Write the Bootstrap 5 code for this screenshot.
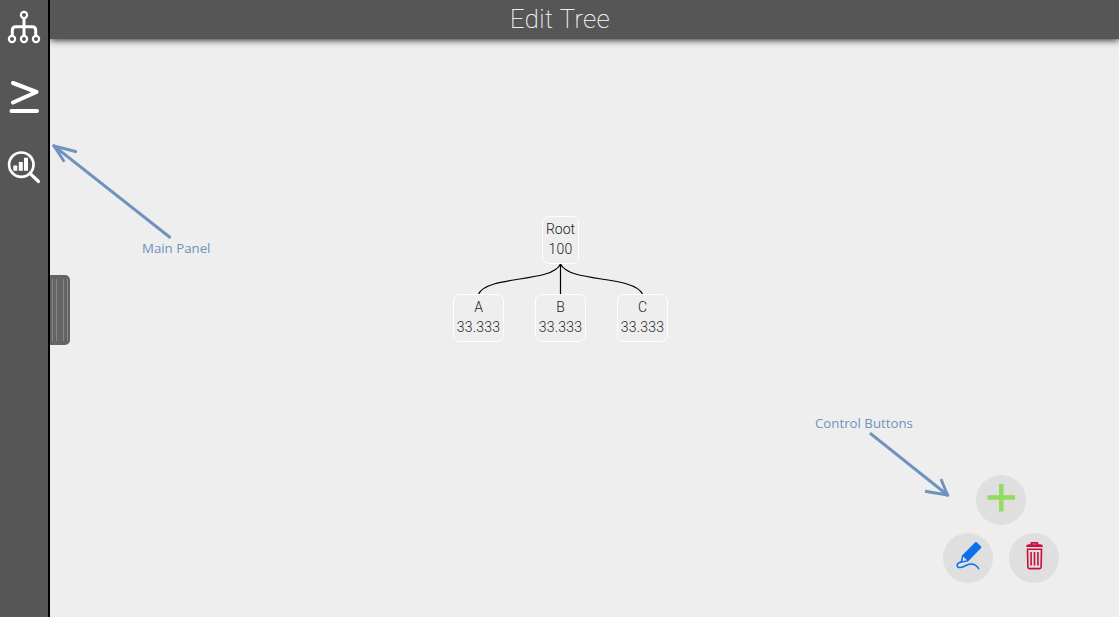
<!DOCTYPE html>
<html lang="en">
<head>
<meta charset="utf-8">
<meta name="viewport" content="width=device-width, initial-scale=1">
<title>Edit Tree</title>
<link href="https://cdn.jsdelivr.net/npm/bootstrap@5.3.0/dist/css/bootstrap.min.css" rel="stylesheet">
<style>
body{background:#eee;font-family:Roboto,"Liberation Sans",sans-serif}
.side{width:50px;background:#565656;border-right:2px solid #000;z-index:3}
.side .tool{width:48px;height:70px;padding:0;border:0;line-height:0}
.side .tool:first-child{height:62px;padding-bottom:6px}
.handle{left:50px;top:275px;width:20px;height:70px;background:#646464;border-radius:0 5px 5px 0;padding:0 2px}
.handle i{width:1px;height:62px;background:#858585}
.topbar{height:39px;background:#565656;box-shadow:0 1px 7px rgba(0,0,0,.85);padding-right:49px}
.topbar h1{font-size:25.5px;font-weight:100;color:#fff;line-height:38px;letter-spacing:.5px;-webkit-text-stroke:.15px #fff}
.tnode{width:51px;height:48px;border:1px solid #fff;border-radius:7px;font-size:14px;font-weight:300;line-height:20px;color:#222;padding-top:2px}
.tnode.top{width:37px}
.tval{letter-spacing:.2px}
.note{font:13.25px/18px "Open Sans",sans-serif;color:#7092be;white-space:nowrap}
.ctl{width:50px;height:50px;background:#dfdfdf;border:0;padding:0;line-height:0}
.controls{right:60px;bottom:34px;width:116px}
</style>
</head>
<body class="vh-100 overflow-hidden d-flex position-relative">
<nav class="side flex-shrink-0 d-flex flex-column vh-100">
  <button class="tool btn" aria-label="Tree">
    <svg width="48" height="48" viewBox="0 0 48 48" fill="none" stroke="#fff" stroke-width="2.2">
      <circle cx="24" cy="11" r="3.1"/><circle cx="12" cy="35" r="3.1"/><circle cx="24" cy="35" r="3.1"/><circle cx="36" cy="35" r="3.1"/>
      <path d="M24 14.500v17.500M12.300 31.500V26.500q0-3.700 3.500-3.700h16.400q3.500 0 3.500 3.700v5" stroke-width="3"/>
    </svg>
  </button>
  <button class="tool btn" aria-label="Comparison">
    <svg width="48" height="48" viewBox="0 0 48 48" fill="none" stroke="#fff" stroke-width="4.1" stroke-linecap="round" stroke-linejoin="round"><path d="M13 10L36.500 19 13 29.500"/><path d="M11.500 38h25.500"/></svg>
  </button>
  <button class="tool btn" aria-label="Analysis">
    <svg width="48" height="48" viewBox="0 0 48 48" fill="none" stroke="#fff" stroke-width="2.700"><circle cx="21.300" cy="21.700" r="12.200"/><path d="M30 30.300l8.500 8.200" stroke-width="3.200" stroke-linecap="round"/><path d="M13.300 22.500h4V27.700h-4zM18.800 19h4V27.700h-4zM24 14.700h4V27.700h-4z" fill="#fff" stroke="none"/></svg>
  </button>
</nav>
<div class="handle position-absolute d-flex align-items-center z-2 justify-content-between"><i></i><i class="me-1"></i><i></i><i></i></div>
<main class="flex-grow-1">
  <header class="topbar d-flex justify-content-center"><h1 class="m-0">Edit Tree</h1></header>
</main>
<!-- tree edges and callout arrows on the canvas -->
<svg class="position-absolute top-0 start-0" width="1119" height="617" fill="none">
  <g stroke="#000" stroke-width="1.2"><path d="M560.5 264v30M560.5 264C552 283 488 275 478.5 294M560.5 264C569 283 633 275 642.5 294"/></g>
  <g stroke="#7092be" stroke-width="2.900" stroke-linecap="square"><path d="M54 146L169.500 237M54 146l21.500 5.500M54 146l9.500 14.500"/><path d="M871 434l76.500 61M947.500 495l-21-3.500M947.500 495l-6-14.500"/></g>
</svg>
<div class="tnode top position-absolute text-center" style="left:542px;top:216px"><div>Root</div><div class="tval">100</div></div>
<div class="tnode position-absolute text-center" style="left:453px;top:294px"><div>A</div><div class="tval">33.333</div></div>
<div class="tnode position-absolute text-center" style="left:535px;top:294px"><div>B</div><div class="tval">33.333</div></div>
<div class="tnode position-absolute text-center" style="left:617px;top:294px"><div>C</div><div class="tval">33.333</div></div>
<div class="note position-absolute" style="left:142px;top:239px">Main Panel</div>
<div class="note position-absolute" style="left:815px;top:414px">Control Buttons</div>
<div class="controls position-absolute d-flex flex-column align-items-center gap-2">
  <button class="ctl rounded-circle" aria-label="Add"><svg width="50" height="50" fill="none" stroke="#92dc62" stroke-width="4.500"><path d="M11.500 22.500h27.500M25.300 9v27.500"/></svg></button>
  <div class="d-flex justify-content-between w-100">
    <button class="ctl rounded-circle" aria-label="Edit"><svg width="50" height="50" fill="none"><path d="M32 9.500q1-.8 2 0l3.800 3.800q.8 1 0 2L25 28.500l-6.700 1.200q-.8 0-.6-1l1.300-6.200z" fill="#0b70ea"/><path d="M20.300 23.500l3.700 3.700-4.600 1.100z" fill="#dfdfdf"/><path d="M19 28.500c-6 2-5.500 4-4 5.800 5 2 8-4 14-3.200 3 .4 5 2 6.700 4.500" stroke="#0b70ea" stroke-width="1.500" stroke-linecap="round"/></svg></button>
    <button class="ctl rounded-circle" aria-label="Delete"><svg width="50" height="50" fill="none" stroke="#c80f3c" stroke-width="1.600"><path d="M18 13.200q0-1.200 1.800-1.200h11.400q1.800 0 1.800 1.200zM22.400 11.500V9.900h6v1.600M18.500 16.300h14l-.4 17.900q-.1 1.400-1.500 1.400H20.400q-1.400 0-1.500-1.400z"/><path d="M22.100 19v13.500M25.500 19v13.500M28.900 19v13.500"/></svg></button>
  </div>
</div>
<script src="https://cdn.jsdelivr.net/npm/bootstrap@5.3.0/dist/js/bootstrap.bundle.min.js"></script>
</body>
</html>
